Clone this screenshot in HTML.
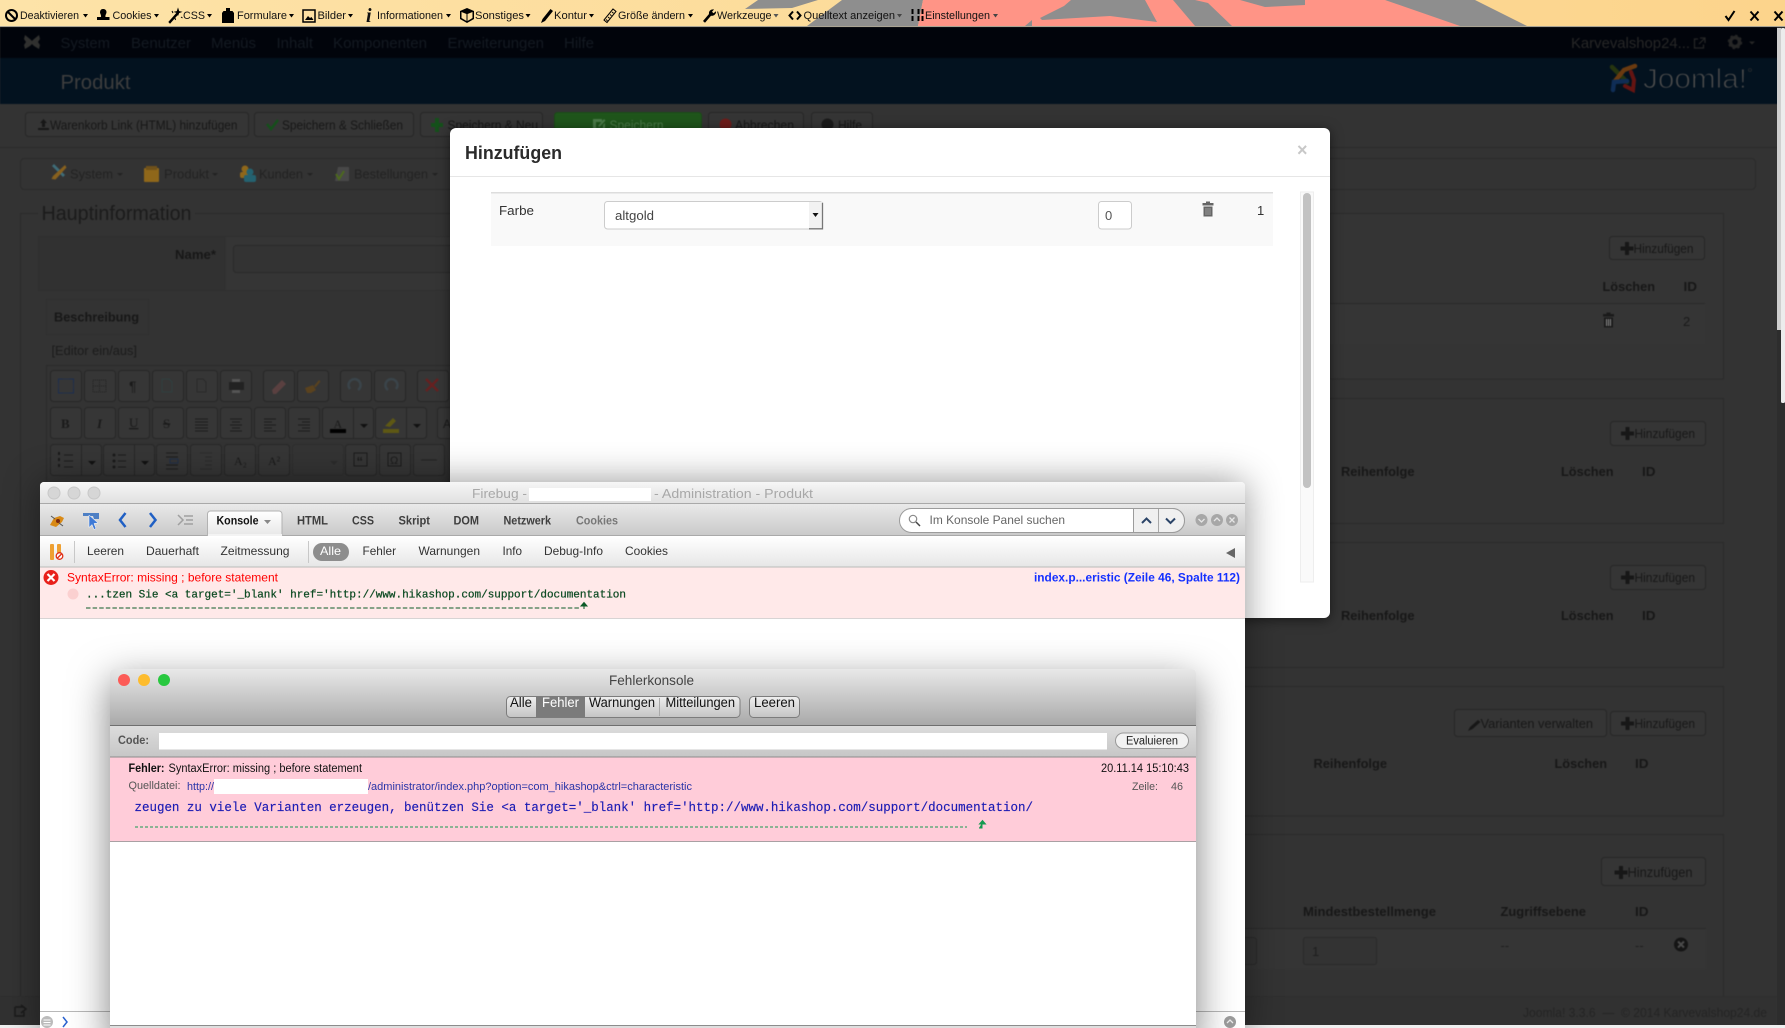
<!DOCTYPE html>
<html lang="de"><head><meta charset="utf-8"><title>Produkt - Administration</title>
<style>
html,body{margin:0;padding:0;background:#333;width:1785px;height:1028px;overflow:hidden}
svg{display:block}
text{font-family:"Liberation Sans",sans-serif;font-size:13px;white-space:pre}
.m{font-family:"Liberation Mono",monospace}
.tb text{font-size:11px;fill:#111}
.nav text{font-size:15px;fill:#141a22}
.bt text{font-size:13px;fill:#171717}
.b{font-weight:bold}
.h text{font-weight:bold;font-size:13px;fill:#171717}
.pb{fill:#353535;stroke:#262626}
.eb{fill:#363636;stroke:#272727}
.soft{filter:blur(.45px)}
.soft2{filter:blur(.25px)}
</style></head><body>
<svg xmlns="http://www.w3.org/2000/svg" width="1785" height="1028" viewBox="0 0 1785 1028">
<defs>
<linearGradient id="gBar" x1="0" x2="1" y1="0" y2="0"><stop offset="0" stop-color="#fde3a8"/><stop offset="1" stop-color="#fcd48c"/></linearGradient>
<linearGradient id="gT" x1="0" x2="0" y1="0" y2="1"><stop offset="0" stop-color="#f6f6f6"/><stop offset="1" stop-color="#e0e0e0"/></linearGradient>
<linearGradient id="gTb" x1="0" x2="0" y1="0" y2="1"><stop offset="0" stop-color="#e9e9e9"/><stop offset="1" stop-color="#c9c9c9"/></linearGradient>
<linearGradient id="gSb" x1="0" x2="0" y1="0" y2="1"><stop offset="0" stop-color="#fff"/><stop offset="1" stop-color="#e6e6e6"/></linearGradient>
<linearGradient id="gFh" x1="0" x2="0" y1="0" y2="1"><stop offset="0" stop-color="#e8e8e8"/><stop offset="1" stop-color="#a9a9a9"/></linearGradient>
<linearGradient id="gFc" x1="0" x2="0" y1="0" y2="1"><stop offset="0" stop-color="#dcdcdc"/><stop offset="1" stop-color="#c6c6c6"/></linearGradient>
<linearGradient id="gSeg" x1="0" x2="0" y1="0" y2="1"><stop offset="0" stop-color="#efefef"/><stop offset="1" stop-color="#c4c4c4"/></linearGradient>
<g id="plus"><path d="M4.500 0h4v4.500H13v4H8.500V13h-4V8.500H0v-4h4.500z" fill="#171717"/></g>
<g id="trash"><path d="M3.500 0h4v1.500h3.500V4H0V1.500h3.500zM1 5h9v10H1z"/><path d="M3.500 6.500v7M5.500 6.500v7M7.500 6.500v7" stroke="#aaa" stroke-width=".8"/></g>
</defs>

<g class="soft">
<!-- page background -->
<rect width="1785" height="1028" fill="#333"/>

<!-- dark nav -->
<rect y="27" width="1785" height="31" fill="#01040b"/>
<rect y="58" width="1785" height="46" fill="#03121f"/>
<g class="nav">
<path d="M25 35l5 4 2 2 2-2 5-4 1 4-2 3 2 3-1 4-5-3-2-2-2 2-5 3-1-4 2-3-2-3z" fill="#30302f"/>
<text x="60.500" y="48" textLength="49.500" lengthAdjust="spacingAndGlyphs">System</text>
<text x="131" y="48" textLength="60" lengthAdjust="spacingAndGlyphs">Benutzer</text>
<text x="211" y="48" textLength="45" lengthAdjust="spacingAndGlyphs">Menüs</text>
<text x="276.500" y="48" textLength="36.500" lengthAdjust="spacingAndGlyphs">Inhalt</text>
<text x="333" y="48" textLength="94" lengthAdjust="spacingAndGlyphs">Komponenten</text>
<text x="447.500" y="48" textLength="96.500" lengthAdjust="spacingAndGlyphs">Erweiterungen</text>
<text x="564" y="48" textLength="30" lengthAdjust="spacingAndGlyphs">Hilfe</text>
<text x="1571" y="48" textLength="119" lengthAdjust="spacingAndGlyphs" style="fill:#272727">Karvevalshop24...</text>
<path d="M1698 39h-3.500v9h9v-3.500M1700 38h5v5M1705 38l-6 6" fill="none" stroke="#272727" stroke-width="1.200"/>
<circle cx="1735" cy="42" r="4.500" fill="none" stroke="#262626" stroke-width="3.500"/><circle cx="1735" cy="42" r="6.500" fill="none" stroke="#262626" stroke-width="1.500" stroke-dasharray="2.500 2.600"/>
<path d="M1749 41.500h6l-3 3z" fill="#262626"/>
</g>
<text x="60.500" y="89" textLength="70" lengthAdjust="spacingAndGlyphs" style="font-size:20px;fill:#3e3e3e">Produkt</text>
<g fill="none" stroke-width="4.500" stroke-linecap="round">
<path d="M1612 67l10 10 5 5" stroke="#26350f"/><path d="M1635 66l-11 4-9 11" stroke="#6a3a10"/><path d="M1631 72l3 8-1 10-8-4" stroke="#641412" stroke-width="4"/><path d="M1613 90l1-8 13-1" stroke="#0f2d55"/>
</g>
<text x="1643" y="88" textLength="104" lengthAdjust="spacingAndGlyphs" style="font-size:28px;fill:#4c4c4c;stroke:#03121f;stroke-width:1">Joomla!</text>
<circle cx="1750" cy="70" r="1.500" fill="none" stroke="#333" stroke-width=".6"/>

<!-- top toolbar -->
<rect y="147" width="1785" height="1" fill="#2a2a2a"/>
<g class="bt">
<rect class="pb" x="25.500" y="112.500" width="223" height="24" rx="3"/>
<rect class="pb" x="254.500" y="112.500" width="159" height="24" rx="3"/>
<rect class="pb" x="420.500" y="112.500" width="122" height="24" rx="3"/>
<rect x="554.500" y="112.500" width="147" height="24" rx="3" fill="#1f551b" stroke="#1a4a17"/>
<rect class="pb" x="708.500" y="112.500" width="95" height="24" rx="3"/>
<rect class="pb" x="811.500" y="112.500" width="61" height="24" rx="3"/>
<path d="M38 128h11v2H38zM43.500 119l3.500 4h-2v4h-3v-4h-2z" fill="#171717"/>
<text x="50" y="129.500" textLength="187.500" lengthAdjust="spacingAndGlyphs">Warenkorb Link (HTML) hinzufügen</text>
<path d="M267 124l4 5 7-9" fill="none" stroke="#14501a" stroke-width="2.500"/>
<text x="282" y="129.500" textLength="121" lengthAdjust="spacingAndGlyphs">Speichern &amp; Schließen</text>
<path d="M435 118h4v5h4v4h-4v5h-4v-5h-4v-4h4z" fill="#14501a"/>
<text x="447.500" y="129.500" textLength="90.500" lengthAdjust="spacingAndGlyphs">Speichern &amp; Neu</text>
<path d="M593 119h9v3h-6v6h7v-3l2-2v7h-12zM598 126l6-7 1.500 1.500-6 6.500z" fill="#4a7a48"/>
<text x="609.500" y="129.500" textLength="54" lengthAdjust="spacingAndGlyphs" style="fill:#4a7a48">Speichern</text>
<circle cx="725.500" cy="124.500" r="6" fill="#6e1c1a"/>
<text x="735" y="129.500" textLength="59" lengthAdjust="spacingAndGlyphs">Abbrechen</text>
<circle cx="827.500" cy="124.500" r="6" fill="#1a1a1a"/>
<text x="838" y="129.500" textLength="24" lengthAdjust="spacingAndGlyphs">Hilfe</text>
</g>

<!-- sub menu bar -->
<rect x="20.500" y="158.500" width="1735" height="31" rx="4" fill="#333" stroke="#2a2a2a"/>
<g class="bt">
<path d="M52 166l11 11 2-2-11-11z" fill="#3f6c78"/><path d="M65 165l-12 11-1.500 3 4 .5 11-12z" fill="#87601e"/>
<text x="70" y="178.500" textLength="43" lengthAdjust="spacingAndGlyphs" style="fill:#222">System</text><path d="M117 173h6l-3 3z" fill="#222"/>
<rect x="144" y="168" width="15" height="14" rx="1" fill="#8f671a"/><rect x="146" y="166" width="11" height="4" fill="#6f511a"/>
<text x="164" y="178.500" textLength="45" lengthAdjust="spacingAndGlyphs" style="fill:#222">Produkt</text><path d="M212 173h6l-3 3z" fill="#222"/>
<circle cx="245" cy="169" r="3.500" fill="#8f671a"/><rect x="240" y="172" width="10" height="6" rx="2" fill="#8f671a"/><circle cx="250" cy="172" r="3.500" fill="#246270"/><rect x="244" y="175" width="12" height="7" rx="2" fill="#246270"/>
<text x="259" y="178.500" textLength="44" lengthAdjust="spacingAndGlyphs" style="fill:#222">Kunden</text><path d="M307 173h6l-3 3z" fill="#222"/>
<path d="M338 167h11v14h-14z" fill="#484848"/><path d="M336 174l3 5 5-8" fill="none" stroke="#4c6a1c" stroke-width="2"/>
<text x="354" y="178.500" textLength="74" lengthAdjust="spacingAndGlyphs" style="fill:#222">Bestellungen</text><path d="M432 173h6l-3 3z" fill="#222"/>
</g>

<!-- Hauptinformation fieldset -->
<path d="M38 213.500H20.500V1040M195 213.500H460" fill="none" stroke="#2a2a2a"/>
<text x="41.500" y="220" textLength="150" lengthAdjust="spacingAndGlyphs" style="font-size:20px;fill:#1b1b1b">Hauptinformation</text>
<rect x="38.500" y="236.500" width="420" height="54" fill="#353535" stroke="#2f2f2f"/>
<rect x="38.500" y="236.500" width="186.500" height="54" fill="#313131" stroke="#2f2f2f"/>
<text x="175" y="259" textLength="41" lengthAdjust="spacingAndGlyphs" class="b" style="fill:#171717">Name*</text>
<rect x="233.500" y="245.500" width="230" height="27" rx="3" fill="#333" stroke="#2a2a2a"/>
<rect x="46.500" y="299.500" width="102" height="35" fill="#333" stroke="#2f2f2f"/>
<text x="54" y="321.500" textLength="85" lengthAdjust="spacingAndGlyphs" class="b" style="fill:#171717">Beschreibung</text>
<text x="51.500" y="355" textLength="85.500" lengthAdjust="spacingAndGlyphs" style="fill:#1b1b1b">[Editor ein/aus]</text>
<rect x="46.500" y="365.500" width="410" height="120" fill="#333" stroke="#2a2a2a"/>

<!-- editor toolbar -->
<g>
<rect class="eb" x="50.500" y="370.500" width="31" height="31" rx="3"/><path d="M58.500 383v-4h4M69.500 379h4v4M73.500 389v4h-4M62.500 393h-4v-4" fill="none" stroke="#1b2e50"/><rect x="58.500" y="379" width="15" height="14" fill="none" stroke="#1b2e50" stroke-width=".7"/>
<rect class="eb" x="84.500" y="370.500" width="31" height="31" rx="3"/><rect x="93" y="380" width="13" height="12" fill="none" stroke="#222" stroke-dasharray="1 1"/><path d="M99.500 380v12M93 386h13" stroke="#222" stroke-dasharray="1 1"/>
<rect class="eb" x="118.500" y="370.500" width="31" height="31" rx="3"/><text x="129" y="391" style="font-size:14px;fill:#1a1a1a">¶</text>
<rect class="eb" x="152.500" y="370.500" width="31" height="31" rx="3"/><path d="M162 379h7l3 3v10h-10z" fill="none" stroke="#2f4040"/>
<rect class="eb" x="186.500" y="370.500" width="31" height="31" rx="3"/><path d="M197 379h6l3 3v10h-9z" fill="none" stroke="#2a2a2a"/>
<rect class="eb" x="220.500" y="370.500" width="31" height="31" rx="3"/><rect x="229" y="382" width="15" height="8" fill="#222"/><rect x="232" y="379" width="8" height="3" fill="#555"/><rect x="232" y="390" width="8" height="3" fill="#555"/>
<rect class="eb" x="263.500" y="370.500" width="31" height="31" rx="3"/><path d="M272 390l10-10 4 4-10 10h-3z" fill="#5a4040"/>
<rect class="eb" x="297.500" y="370.500" width="31" height="31" rx="3"/><path d="M305 388l8-3 3 5-5 3h-4zM314 386l5-6 1.500 1.500-5 6z" fill="#5a421e"/>
<rect class="eb" x="340.500" y="370.500" width="31" height="31" rx="3"/><path d="M350 389a6 6 0 1 1 8 1" fill="none" stroke="#3a444a" stroke-width="2.500"/>
<rect class="eb" x="374.500" y="370.500" width="31" height="31" rx="3"/><path d="M396 389a6 6 0 1 0-8 1" fill="none" stroke="#3a444a" stroke-width="2.500"/>
<rect class="eb" x="417.500" y="370.500" width="31" height="31" rx="3"/><path d="M426 379l12 12M438 379l-12 12" stroke="#662020" stroke-width="2.500"/>

<rect class="eb" x="50.500" y="407.500" width="31" height="31" rx="3"/><text x="61" y="428" style="font-family:'Liberation Serif',serif;font-size:13px;font-weight:bold;fill:#1a1a1a">B</text>
<rect class="eb" x="84.500" y="407.500" width="31" height="31" rx="3"/><text x="97" y="428" style="font-family:'Liberation Serif',serif;font-size:13px;font-style:italic;font-weight:bold;fill:#1a1a1a">I</text>
<rect class="eb" x="118.500" y="407.500" width="31" height="31" rx="3"/><text x="129" y="427" style="font-family:'Liberation Serif',serif;font-size:13px;fill:#1a1a1a;text-decoration:underline">U</text>
<rect class="eb" x="152.500" y="407.500" width="31" height="31" rx="3"/><text x="163" y="428" style="font-family:'Liberation Serif',serif;font-size:13px;fill:#1a1a1a;text-decoration:line-through">S</text>
<rect class="eb" x="186.500" y="407.500" width="31" height="31" rx="3"/><path d="M195 419h13M195 422h13M195 425h13M195 428h13M195 431h13" stroke="#1c1c1c"/>
<rect class="eb" x="220.500" y="407.500" width="31" height="31" rx="3"/><path d="M230 419h12M232 422h8M230 425h12M232 428h8M230 431h12" stroke="#1c1c1c"/>
<rect class="eb" x="254.500" y="407.500" width="31" height="31" rx="3"/><path d="M264 419h12M264 422h8M264 425h12M264 428h8M264 431h12" stroke="#1c1c1c"/>
<rect class="eb" x="288.500" y="407.500" width="31" height="31" rx="3"/><path d="M298 419h12M302 422h8M298 425h12M302 428h8M298 431h12" stroke="#1c1c1c"/>
<rect class="eb" x="322.500" y="407.500" width="51" height="31" rx="3"/><path d="M353.500 408v30" stroke="#272727"/><text x="333.500" y="428" style="font-family:'Liberation Serif',serif;font-size:12px;fill:#1a1a1a">A</text><rect x="330" y="429" width="16" height="4" fill="#000"/><path d="M360 424h8l-4 4z" fill="#111"/>
<rect class="eb" x="375.500" y="407.500" width="51" height="31" rx="3"/><path d="M406.500 408v30" stroke="#272727"/><path d="M385 426l8-8 3 3-6 6z" fill="#5e5814"/><rect x="383" y="429" width="16" height="4" fill="#5e5814"/><path d="M413 424h8l-4 4z" fill="#111"/>
<rect class="eb" x="437.500" y="407.500" width="20" height="31" rx="3"/><text x="443" y="428" style="font-size:12px;fill:#1a1a1a">A</text>

<rect class="eb" x="50.500" y="444.500" width="51" height="31" rx="3"/><path d="M81.500 445v30" stroke="#272727"/><path d="M64 455h9M64 461h9M64 467h9" stroke="#1a1a1a"/><path d="M59 452v3M59 458v3M59 464v3" stroke="#1a1a1a" stroke-width="2"/><path d="M88 461h8l-4 4z" fill="#111"/>
<rect class="eb" x="103.500" y="444.500" width="51" height="31" rx="3"/><path d="M134.500 445v30" stroke="#272727"/><path d="M118 455h8M118 461h8M118 467h8" stroke="#1a1a1a"/><circle cx="114" cy="455" r="1.500" fill="#1a1a1a"/><circle cx="114" cy="461" r="1.500" fill="#1a1a1a"/><circle cx="114" cy="467" r="1.500" fill="#1a1a1a"/><path d="M141 461h8l-4 4z" fill="#111"/>
<rect class="eb" x="156.500" y="444.500" width="31" height="31" rx="3"/><path d="M166 453h12M166 469h12M166 457h12M166 465h12" stroke="#1c1c1c"/><rect x="170" y="459" width="8" height="4" fill="none" stroke="#1e2e48"/>
<rect class="eb" x="190.500" y="444.500" width="31" height="31" rx="3"/><path d="M200 453h12M205 457h7M205 461h7M205 465h7M200 469h12" stroke="#2a2a2a"/>
<rect class="eb" x="224.500" y="444.500" width="31" height="31" rx="3"/><text x="234" y="465" style="font-family:'Liberation Serif',serif;font-size:12px;fill:#1a1a1a">A₂</text>
<rect class="eb" x="258.500" y="444.500" width="31" height="31" rx="3"/><text x="268" y="465" style="font-family:'Liberation Serif',serif;font-size:12px;fill:#1a1a1a">A²</text>
<rect x="292.500" y="444.500" width="51" height="31" rx="3" fill="#343434" stroke="#2e2e2e"/><path d="M330 461h8l-4 4z" fill="#2b2b2b"/>
<rect class="eb" x="345.500" y="444.500" width="31" height="31" rx="3"/><rect x="354" y="453" width="13" height="13" fill="none" stroke="#1a1a1a"/><text x="356.500" y="466" style="font-size:13px;font-weight:bold;fill:#1a1a1a">“</text>
<rect class="eb" x="379.500" y="444.500" width="31" height="31" rx="3"/><rect x="388" y="453" width="13" height="13" fill="none" stroke="#1a1a1a"/><text x="390" y="464" style="font-size:11px;fill:#1a1a1a">Ω</text>
<rect class="eb" x="413.500" y="444.500" width="31" height="31" rx="3"/><path d="M421 460h16" stroke="#222"/>
</g>

<!-- right panels -->
<g fill="none" stroke="#2a2a2a">
<rect x="1330" y="213.500" width="393.500" height="165.500" fill="#343434"/>
<rect x="1230" y="398.500" width="493.500" height="125"/>
<rect x="1230" y="542.500" width="493.500" height="125"/>
<rect x="1230" y="686.500" width="493.500" height="129.500"/>
<rect x="1230" y="834.500" width="493.500" height="200"/>
</g>
<g class="bt">
<rect class="pb" x="1609.500" y="236.500" width="95" height="23" rx="3"/><use href="#plus" x="1620.500" y="242"/><text x="1633.500" y="253" textLength="60" lengthAdjust="spacingAndGlyphs">Hinzufügen</text>
<rect class="pb" x="1610.500" y="421.500" width="95" height="24" rx="3"/><use href="#plus" x="1621" y="427"/><text x="1634.500" y="438" textLength="60.500" lengthAdjust="spacingAndGlyphs">Hinzufügen</text>
<rect class="pb" x="1610.500" y="565.500" width="95" height="24" rx="3"/><use href="#plus" x="1621" y="571"/><text x="1634.500" y="582" textLength="60.500" lengthAdjust="spacingAndGlyphs">Hinzufügen</text>
<rect class="pb" x="1454.500" y="709.500" width="152" height="27" rx="3"/><path d="M1468 731l2-4 8-7 2.500 2-8 7z" fill="#171717"/><text x="1480.500" y="728" textLength="112.500" lengthAdjust="spacingAndGlyphs">Varianten verwalten</text>
<rect class="pb" x="1610.500" y="711.500" width="95" height="24" rx="3"/><use href="#plus" x="1621" y="717"/><text x="1634.500" y="728" textLength="60.500" lengthAdjust="spacingAndGlyphs">Hinzufügen</text>
<rect class="pb" x="1601.500" y="857.500" width="104" height="28" rx="3"/><use href="#plus" x="1614.500" y="866"/><text x="1627.500" y="877" textLength="65" lengthAdjust="spacingAndGlyphs" style="font-size:14px">Hinzufügen</text>
</g>
<g class="h">
<text x="1602.500" y="291" textLength="52.500" lengthAdjust="spacingAndGlyphs">Löschen</text><text x="1683.500" y="291" textLength="13.500" lengthAdjust="spacingAndGlyphs">ID</text>
<text x="1341" y="476" textLength="73.500" lengthAdjust="spacingAndGlyphs">Reihenfolge</text><text x="1561" y="476" textLength="52.500" lengthAdjust="spacingAndGlyphs">Löschen</text><text x="1642" y="476" textLength="13.500" lengthAdjust="spacingAndGlyphs">ID</text>
<text x="1341" y="620" textLength="73.500" lengthAdjust="spacingAndGlyphs">Reihenfolge</text><text x="1561" y="620" textLength="52.500" lengthAdjust="spacingAndGlyphs">Löschen</text><text x="1642" y="620" textLength="13.500" lengthAdjust="spacingAndGlyphs">ID</text>
<text x="1313.500" y="768" textLength="73.500" lengthAdjust="spacingAndGlyphs">Reihenfolge</text><text x="1554.500" y="768" textLength="52.500" lengthAdjust="spacingAndGlyphs">Löschen</text><text x="1635" y="768" textLength="13.500" lengthAdjust="spacingAndGlyphs">ID</text>
<text x="1303" y="916" textLength="133" lengthAdjust="spacingAndGlyphs">Mindestbestellmenge</text><text x="1500.500" y="916" textLength="85.500" lengthAdjust="spacingAndGlyphs">Zugriffsebene</text><text x="1635" y="916" textLength="13.500" lengthAdjust="spacingAndGlyphs">ID</text>
</g>
<rect x="1330" y="303" width="375" height="1" fill="#2a2a2a"/>
<rect x="1330" y="304" width="375" height="40" fill="#353535"/>
<use href="#trash" x="1603" y="312.500" fill="#1a1a1a"/>
<text x="1683" y="326" style="fill:#1a1a1a">2</text>
<rect x="1230" y="928" width="476" height="1" fill="#2a2a2a"/>
<rect x="1230" y="929" width="476" height="40" fill="#353535"/>
<rect x="1200" y="937.500" width="56.500" height="27" rx="3" fill="#333" stroke="#2a2a2a"/>
<rect x="1303.500" y="937.500" width="73" height="27" rx="2" fill="#333" stroke="#2a2a2a"/>
<text x="1312" y="956" style="fill:#1e1e1e">1</text>
<text x="1500.500" y="950" style="fill:#1e1e1e">--</text><text x="1635" y="950" style="fill:#1e1e1e">--</text>
<circle cx="1681" cy="944.500" r="7" fill="#151515"/><path d="M1678 941.500l6 6M1684 941.500l-6 6" stroke="#4a4a4a" stroke-width="2"/>

<!-- footer -->
<rect y="996" width="1777" height="1" fill="#2e2e2e"/>
<rect y="997" width="1777" height="29" fill="#313131"/>
<text x="1523" y="1017" textLength="244" lengthAdjust="spacingAndGlyphs" style="font-size:13px;fill:#242424">Joomla! 3.3.6  —  © 2014 Karvevalshop24.de</text>
<path d="M15 1007h8M15 1007v9h9v-4M21 1005l5 4-5 4" fill="none" stroke="#1a1a1a" stroke-width="1.500"/>
<path d="M20.500 960v36" stroke="#282828"/>
</g>
<rect y="1025" width="1785" height="3" fill="#efefef"/>

<!-- browser add-on bar -->
<rect width="1785" height="27" fill="url(#gBar)"/>
<g>
<path d="M745 9 758 0H818L792 8Z" fill="#8e8e8e"/>
<path d="M842 0H923L918 26H807Z" fill="#8e8e8e"/>
<path d="M923 0H1385L1525 26H918Z" fill="#ff9486"/>
<path d="M1025 26 1032 20V26Z" fill="#8e8e8e"/>
<path d="M1040 18 1064 6 1071 0H1145L1157 22 1110 16 1042 20Z" fill="#8e8e8e"/>
<path d="M1173 0H1195L1208 3 1232 26H1195Z" fill="#8e8e8e"/>
<path d="M1240 0H1305V5L1265 7Z" fill="#8e8e8e"/>
<path d="M1385 0H1475L1527 26H1460Z" fill="#8e8e8e"/>
</g>
<rect y="26" width="1785" height="1" fill="#a9a494"/>
<g class="tb">
<circle cx="11.500" cy="15.500" r="5.500" fill="none" stroke="#000" stroke-width="2"/><path d="M7.500 11.500l8 8" stroke="#000" stroke-width="2"/>
<text x="20" y="19" textLength="59" lengthAdjust="spacingAndGlyphs">Deaktivieren</text><path d="M83 14h5l-2.500 3.500z"/>
<path d="M103.500 9a3 3 0 0 1 3 3c0 2-1.500 3-1 5h4v3H97v-3h4c.5-2-1-3-1-5a3 3 0 0 1 3.500-3z"/>
<text x="112.500" y="19" textLength="39" lengthAdjust="spacingAndGlyphs">Cookies</text><path d="M154 14h5l-2.500 3.500z"/>
<path d="M169 22l8-9 1 1-8 9zM178 9l.8 2.500 2 .5-2 .7-.8 2-.8-2-2-.7 2-.5zM172 11l1 2M181 17l1.500 1M175 18l.5 2" stroke="#000" stroke-width="1"/>
<text x="183" y="19" textLength="22" lengthAdjust="spacingAndGlyphs">CSS</text><path d="M207 14h5l-2.500 3.500z"/>
<path d="M226 8h4v3h2.500l1.500 2v10h-12V13l1.500-2H226z"/>
<text x="237" y="19" textLength="50" lengthAdjust="spacingAndGlyphs">Formulare</text><path d="M289 14h5l-2.500 3.500z"/>
<rect x="303" y="10" width="12" height="12" fill="none" stroke="#000" stroke-width="1.500"/><path d="M305 20l3-4 2 2 1.500-1 2 3z"/>
<text x="317.500" y="19" textLength="28.500" lengthAdjust="spacingAndGlyphs">Bilder</text><path d="M348 14h5l-2.500 3.500z"/>
<text x="366" y="22" style="font-family:'Liberation Serif',serif;font-size:20px;font-weight:bold;font-style:italic">i</text>
<text x="377" y="19" textLength="66" lengthAdjust="spacingAndGlyphs">Informationen</text><path d="M446 14h5l-2.500 3.500z"/>
<path d="M467 8l7 3v8l-7 4-7-4v-8zM461.500 12l5 2v7l-5-3zM472.500 12l-5 2v7l5-3z" fill-rule="evenodd"/>
<text x="475" y="19" textLength="49" lengthAdjust="spacingAndGlyphs">Sonstiges</text><path d="M525.500 14h5l-2.500 3.500z"/>
<path d="M541 23l1.500-4 8-10 2.500 2-8 10z"/>
<text x="554" y="19" textLength="33" lengthAdjust="spacingAndGlyphs">Kontur</text><path d="M589 14h5l-2.500 3.500z"/>
<path d="M604 20l9-11 3 2.500-9 11zM606 19.500l1.500 1.300M608 17l1.500 1.300M610 14.500l1.500 1.300M612 12l1.500 1.300" fill="none" stroke="#000" stroke-width="1"/>
<text x="618" y="19" textLength="67" lengthAdjust="spacingAndGlyphs">Größe ändern</text><path d="M688 14h5l-2.500 3.500z"/>
<path d="M703 21l6-7c-.5-2.500 1.500-5 5-4.500l-2 2.300 1.500 1.500 2.500-2c.4 3-2.500 5-5 4.500l-6 7z"/>
<text x="717" y="19" textLength="54.500" lengthAdjust="spacingAndGlyphs">Werkzeuge</text><path d="M773.500 14h5l-2.500 3.500z" fill="#555"/>
<path d="M793 11.500l-3.500 4 3.500 4M797 11.500l3.500 4-3.500 4" fill="none" stroke="#000" stroke-width="2"/>
<text x="803.500" y="19" textLength="91.500" lengthAdjust="spacingAndGlyphs">Quelltext anzeigen</text><path d="M897 14h5l-2.500 3.500z" fill="#444"/>
<path d="M912.500 9v14M918.500 9v14M922.500 9v14" stroke="#000" stroke-width="2" stroke-dasharray="5 2"/>
<text x="925" y="19" textLength="65" lengthAdjust="spacingAndGlyphs">Einstellungen</text><path d="M993 14h5l-2.500 3.500z" fill="#444"/>
<path d="M1725.500 16l3 4 6-9" fill="none" stroke="#000" stroke-width="2"/>
<path d="M1750.500 11.500l8 9M1758.500 11.500l-8 9M1774.500 11.500l8 9M1782.500 11.500l-8 9" stroke="#000" stroke-width="2"/>
</g>

<!-- page scrollbar -->
<rect x="1777" y="27" width="8" height="998" fill="#2d2d2d"/>
<rect x="1777" y="28" width="4" height="302" fill="#cfcfcf"/>
<rect x="1781" y="28" width="4" height="375" rx="1.500" fill="#ececec"/>

<g class="soft2">
<!-- Modal -->
<rect x="450" y="128" width="880" height="490" rx="6" fill="#fff" style="filter:drop-shadow(0 2px 6px rgba(0,0,0,.5))"/>
<text x="465" y="159" textLength="97" lengthAdjust="spacingAndGlyphs" class="b" style="font-size:18px;fill:#2b2b2b">Hinzufügen</text>
<text x="1297" y="156" class="b" style="font-size:18px;fill:#c8c8c8">×</text>
<rect x="450" y="176" width="880" height="1" fill="#e6e6e6"/>
<rect x="491" y="192" width="782" height="54" fill="#f9f9f9"/>
<rect x="491" y="192" width="782" height="1.500" fill="#ddd"/>
<text x="499" y="215" textLength="35" lengthAdjust="spacingAndGlyphs" style="fill:#333">Farbe</text>
<rect x="604.500" y="201.500" width="218" height="27.500" rx="3" fill="#fff" stroke="#ccc"/>
<rect x="809" y="202" width="13" height="27" fill="#f2f2f2"/>
<path d="M809 228.800h13.500v-26" fill="none" stroke="#777" stroke-width="1.300"/>
<path d="M812.500 213h6l-3 4z" fill="#111"/>
<text x="615" y="220" textLength="39" lengthAdjust="spacingAndGlyphs" style="fill:#444">altgold</text>
<rect x="1098.500" y="201.500" width="33" height="27.500" rx="3" fill="#fff" stroke="#ccc"/>
<text x="1105" y="220" style="fill:#555">0</text>
<use href="#trash" x="1202.500" y="201.500" fill="#666"/>
<text x="1257" y="215" style="fill:#333">1</text>
<rect x="1300.500" y="192" width="13" height="390" fill="#fafafa" stroke="#eee"/>
<rect x="1303" y="193" width="8" height="295" rx="4" fill="#c2c2c2"/>

<!-- Firebug window -->
<g>
<path d="M44 482H1241a4 4 0 0 1 4 4V1040H40V486a4 4 0 0 1 4-4z" fill="#fff" style="filter:drop-shadow(0 0 18px rgba(0,0,0,.42))"/>
<path d="M44 482H1241a4 4 0 0 1 4 4V503H40V486a4 4 0 0 1 4-4z" fill="url(#gT)"/>
<rect x="40" y="503" width="1205" height="1" fill="#a9a9a9"/>
<circle cx="54" cy="493" r="6" fill="#d6d6d6" stroke="#c8c8c8"/><circle cx="74" cy="493" r="6" fill="#d6d6d6" stroke="#c8c8c8"/><circle cx="94" cy="493" r="6" fill="#d6d6d6" stroke="#c8c8c8"/>
<text x="472" y="498" textLength="55" lengthAdjust="spacingAndGlyphs" style="fill:#a8a8a8">Firebug -</text>
<rect x="529" y="488" width="122" height="13" fill="#fff"/>
<text x="654" y="498" textLength="159" lengthAdjust="spacingAndGlyphs" style="fill:#a8a8a8">- Administration - Produkt</text>

<rect x="40" y="504" width="1205" height="31" fill="url(#gTb)"/>
<rect x="40" y="535" width="1205" height="1" fill="#a9a9a9"/>
<path d="M50 525l4-7 6-2 4 2-2 4-6 5z" fill="#d98a16"/><circle cx="58" cy="521" r="2" fill="#7a2a10"/><path d="M51 516l4 3M63 526l-4-3" stroke="#555"/>
<path d="M83 513h16v6h-5l-1-3h-10z" fill="#4d7fc4"/><path d="M89 515l9 8-4 .5 2 5-2 1-2-5-3 3z" fill="#3f7ad6" stroke="#fff" stroke-width=".5"/>
<path d="M125.500 513l-5.500 7 5.500 7" fill="none" stroke="#1f5fc4" stroke-width="2.500"/>
<path d="M150 513l5.500 7-5.500 7" fill="none" stroke="#1f5fc4" stroke-width="2.500"/>
<path d="M178 515l5 5-5 5" fill="none" stroke="#a0a0a0" stroke-width="1.500"/><path d="M184 516h9M186 520h7M184 524h9" stroke="#a0a0a0" stroke-width="1.500"/>
<path d="M207.500 536V514a3 3 0 0 1 3-3H279a3 3 0 0 1 3 3V536z" fill="url(#gSb)" stroke="#b2b2b2"/>
<rect x="208" y="534" width="74" height="3" fill="#f3f3f3"/>
<text x="216.500" y="524.500" textLength="42" lengthAdjust="spacingAndGlyphs" class="b" style="font-size:11.500px;fill:#111">Konsole</text>
<path d="M264 520h7l-3.500 4z" fill="#888"/>
<g style="fill:#3e3e3e">
<text x="297" y="524.500" textLength="31" lengthAdjust="spacingAndGlyphs" style="font-size:11.500px;font-weight:bold;fill:#3e3e3e">HTML</text>
<text x="352" y="524.500" textLength="22" lengthAdjust="spacingAndGlyphs" style="font-size:11.500px;font-weight:bold;fill:#3e3e3e">CSS</text>
<text x="398.500" y="524.500" textLength="31.500" lengthAdjust="spacingAndGlyphs" style="font-size:11.500px;font-weight:bold;fill:#3e3e3e">Skript</text>
<text x="453.500" y="524.500" textLength="25.500" lengthAdjust="spacingAndGlyphs" style="font-size:11.500px;font-weight:bold;fill:#3e3e3e">DOM</text>
<text x="503.500" y="524.500" textLength="47.500" lengthAdjust="spacingAndGlyphs" style="font-size:11.500px;font-weight:bold;fill:#3e3e3e">Netzwerk</text>
<text x="576" y="524.500" textLength="42" lengthAdjust="spacingAndGlyphs" style="font-size:11.500px;font-weight:bold;fill:#777">Cookies</text>
</g>
<rect x="899.500" y="508.500" width="285" height="24" rx="12" fill="#fff" stroke="#9c9c9c"/>
<path d="M1133.500 508.500H1172.500a12 12 0 0 1 0 24H1133.500z" fill="#f0f0f0" stroke="#9c9c9c"/>
<path d="M1158.500 509v23" stroke="#a8a8a8"/>
<circle cx="913" cy="519" r="3.700" fill="none" stroke="#888" stroke-width="1.200"/><path d="M916 522l4 4" stroke="#444" stroke-width="1.500"/>
<text x="929.500" y="524" textLength="135.500" lengthAdjust="spacingAndGlyphs" style="font-size:12px;fill:#666">Im Konsole Panel suchen</text>
<path d="M1142 523l4.500-4.500 4.500 4.500M1166 518.500l4.500 4.500 4.500-4.500" fill="none" stroke="#2b4468" stroke-width="2"/>
<circle cx="1201.500" cy="520" r="6" fill="#a7a7a7"/><path d="M1198.500 519l3 3 3-3" fill="none" stroke="#e5e5e5" stroke-width="1.300"/>
<circle cx="1217" cy="520" r="6" fill="#a7a7a7"/><path d="M1214 521l3-3 3 3" fill="none" stroke="#e5e5e5" stroke-width="1.300"/>
<circle cx="1232" cy="520" r="6" fill="#a7a7a7"/><path d="M1229.500 517.500l5 5M1234.500 517.500l-5 5" stroke="#e5e5e5" stroke-width="1.300"/>

<rect x="40" y="536" width="1205" height="31" fill="url(#gSb)"/>
<rect x="40" y="566.500" width="1205" height="1" fill="#b9bcb9"/>
<rect x="50" y="544" width="4" height="16" rx="1" fill="#eea032"/><rect x="57" y="544" width="4" height="9" rx="1" fill="#eea032"/><circle cx="59.500" cy="556" r="3.300" fill="#fff" stroke="#e03018" stroke-width="1.300"/><path d="M57.500 558l4-4" stroke="#e03018" stroke-width="1.300"/>
<path d="M74.500 541v22M308.500 541v22" stroke="#c8c8c8"/>
<rect x="313" y="543" width="36" height="18" rx="9" fill="#8d8d8d"/>
<g>
<text x="87" y="555" textLength="37" lengthAdjust="spacingAndGlyphs" style="font-size:12px;fill:#333">Leeren</text>
<text x="146" y="555" textLength="53" lengthAdjust="spacingAndGlyphs" style="font-size:12px;fill:#333">Dauerhaft</text>
<text x="220.500" y="555" textLength="69" lengthAdjust="spacingAndGlyphs" style="font-size:12px;fill:#333">Zeitmessung</text>
<text x="320" y="555" textLength="21" lengthAdjust="spacingAndGlyphs" style="font-size:12px;fill:#fff">Alle</text>
<text x="362.500" y="555" textLength="33.500" lengthAdjust="spacingAndGlyphs" style="font-size:12px;fill:#333">Fehler</text>
<text x="418.500" y="555" textLength="61.500" lengthAdjust="spacingAndGlyphs" style="font-size:12px;fill:#333">Warnungen</text>
<text x="502.500" y="555" textLength="19.500" lengthAdjust="spacingAndGlyphs" style="font-size:12px;fill:#333">Info</text>
<text x="544" y="555" textLength="59" lengthAdjust="spacingAndGlyphs" style="font-size:12px;fill:#333">Debug-Info</text>
<text x="625" y="555" textLength="43" lengthAdjust="spacingAndGlyphs" style="font-size:12px;fill:#333">Cookies</text>
</g>
<path d="M1226 553l9-5v10z" fill="#666"/>

<rect x="40" y="567.500" width="1205" height="51" fill="#ffe9e9"/>
<rect x="40" y="618" width="1205" height="1" fill="#d8d4d4"/>
<circle cx="51" cy="577.500" r="7.500" fill="#e8201a"/><path d="M47.500 574l7 7M54.500 574l-7 7" stroke="#fff" stroke-width="2.200"/>
<text x="67" y="581.500" textLength="211" lengthAdjust="spacingAndGlyphs" style="font-size:12px;fill:#f00">SyntaxError: missing ; before statement</text>
<text x="1034" y="581.500" textLength="206" lengthAdjust="spacingAndGlyphs" class="b" style="font-size:12px;fill:#1430ff">index.p...eristic (Zeile 46, Spalte 112)</text>
<circle cx="73" cy="594" r="5.500" fill="#fbd0d0"/>
<text class="m" x="86" y="597.500" textLength="540" style="font-size:11px;fill:#0c4a22;stroke:#0c4a22;stroke-width:.25">...tzen Sie &lt;a target='_blank' href='http://www.hikashop.com/support/documentation</text>
<path d="M86 608H581" stroke="#0c5a28" stroke-dasharray="4.500 2.100"/>
<path d="M584 609v-3.500M581 606l3-3.500 3 3.500z" stroke="#0c5a28" fill="#0c5a28"/>

<rect x="40" y="1011" width="1205" height="1" fill="#b8b8b8"/>
<circle cx="47" cy="1022" r="6" fill="#bbb"/><path d="M43.500 1020h7M43.500 1022.500h7M43.500 1025h7" stroke="#fff"/>
<path d="M63 1017l4 5-4 5" fill="none" stroke="#2a62d0" stroke-width="1.500"/>
<circle cx="1230" cy="1022" r="6" fill="#9c9c9c"/><path d="M1227 1023l3-3 3 3" fill="none" stroke="#eee" stroke-width="1.300"/>
</g>

<!-- Fehlerkonsole window -->
<g>
<path d="M114 669H1192a4 4 0 0 1 4 4V1040H110V673a4 4 0 0 1 4-4z" fill="#fff" style="filter:drop-shadow(0 12px 20px rgba(0,0,0,.5))"/>
<path d="M114 669H1192a4 4 0 0 1 4 4V725H110V673a4 4 0 0 1 4-4z" fill="url(#gFh)"/>
<rect x="110" y="725" width="1086" height="1" fill="#6f6f6f"/>
<circle cx="124" cy="680" r="6" fill="#fc5b57"/><circle cx="144" cy="680" r="6" fill="#fdbc2e"/><circle cx="164" cy="680" r="6" fill="#28c83f"/>
<text x="609" y="685" textLength="85" lengthAdjust="spacingAndGlyphs" style="font-size:14px;fill:#444">Fehlerkonsole</text>
<rect x="506.500" y="696.500" width="233.500" height="21" rx="4" fill="url(#gSeg)" stroke="#7c7c7c"/>
<rect x="536" y="697" width="49" height="20" fill="#7b7b7b"/>
<path d="M659.500 698v18" stroke="#aaa"/>
<text x="510" y="707" textLength="22" lengthAdjust="spacingAndGlyphs" style="font-size:13.500px;fill:#111">Alle</text>
<text x="542" y="707" textLength="37" lengthAdjust="spacingAndGlyphs" style="font-size:13.500px;fill:#fff">Fehler</text>
<text x="589" y="707" textLength="66" lengthAdjust="spacingAndGlyphs" style="font-size:13.500px;fill:#111">Warnungen</text>
<text x="665.500" y="707" textLength="69.500" lengthAdjust="spacingAndGlyphs" style="font-size:13.500px;fill:#111">Mitteilungen</text>
<rect x="749.500" y="696.500" width="50" height="21" rx="4" fill="url(#gSeg)" stroke="#7c7c7c"/>
<text x="754" y="707" textLength="41" lengthAdjust="spacingAndGlyphs" style="font-size:13.500px;fill:#111">Leeren</text>

<rect x="110" y="726" width="1086" height="31" fill="url(#gFc)"/>
<rect x="110" y="756.500" width="1086" height="1" fill="#8c8c8c"/>
<text x="118" y="744" textLength="31" lengthAdjust="spacingAndGlyphs" class="b" style="font-size:11.500px;fill:#555">Code:</text>
<rect x="159" y="733" width="948" height="16.500" fill="#fff"/>
<rect x="1115.500" y="733" width="73" height="15.500" rx="7.800" fill="#f2f2f2" stroke="#999"/>
<text x="1126" y="744.500" textLength="52" lengthAdjust="spacingAndGlyphs" style="font-size:11.500px;fill:#222">Evaluieren</text>

<rect x="110" y="757.500" width="1086" height="84" fill="#ffccd9"/>
<rect x="110" y="841" width="1086" height="1" fill="#a9a0a3"/>
<text x="128.500" y="772" textLength="36" lengthAdjust="spacingAndGlyphs" class="b" style="font-size:11.500px;fill:#111">Fehler:</text>
<text x="168.500" y="772" textLength="193.500" lengthAdjust="spacingAndGlyphs" style="font-size:11.500px;fill:#111">SyntaxError: missing ; before statement</text>
<text x="128.500" y="789" textLength="52" lengthAdjust="spacingAndGlyphs" style="font-size:11px;fill:#555">Quelldatei:</text>
<text x="187" y="790" textLength="27" lengthAdjust="spacingAndGlyphs" style="font-size:11px;fill:#2a35a8">http://</text>
<rect x="214" y="779" width="154" height="15" fill="#fff"/>
<text x="368" y="790" textLength="324" lengthAdjust="spacingAndGlyphs" style="font-size:11px;fill:#2a35a8">/administrator/index.php?option=com_hikashop&amp;ctrl=characteristic</text>
<text class="m" x="134.500" y="811" textLength="898.500" style="font-size:12.500px;fill:#1b1bb4;stroke:#1b1bb4;stroke-width:.15">zeugen zu viele Varianten erzeugen, benützen Sie &lt;a target='_blank' href='http://www.hikashop.com/support/documentation/</text>
<path d="M135 827H967" stroke="#159a50" stroke-dasharray="3 2"/>
<path d="M979 828h3v-5M979.500 824l3-3.500 3 3.500z" stroke="#159a50" fill="#159a50"/>
<text x="1101" y="772" textLength="88" lengthAdjust="spacingAndGlyphs" style="font-size:11.500px;fill:#111">20.11.14 15:10:43</text>
<text x="1132" y="790" textLength="26" lengthAdjust="spacingAndGlyphs" style="font-size:11px;fill:#555">Zeile:</text>
<text x="1171" y="790" textLength="12" lengthAdjust="spacingAndGlyphs" style="font-size:11px;fill:#555">46</text>
<rect x="110" y="1025" width="1086" height="1" fill="#8c8c8c"/>
<rect x="110" y="1026" width="1086" height="2" fill="#dedede"/>
</g>
</g>
</svg>
</body></html>
